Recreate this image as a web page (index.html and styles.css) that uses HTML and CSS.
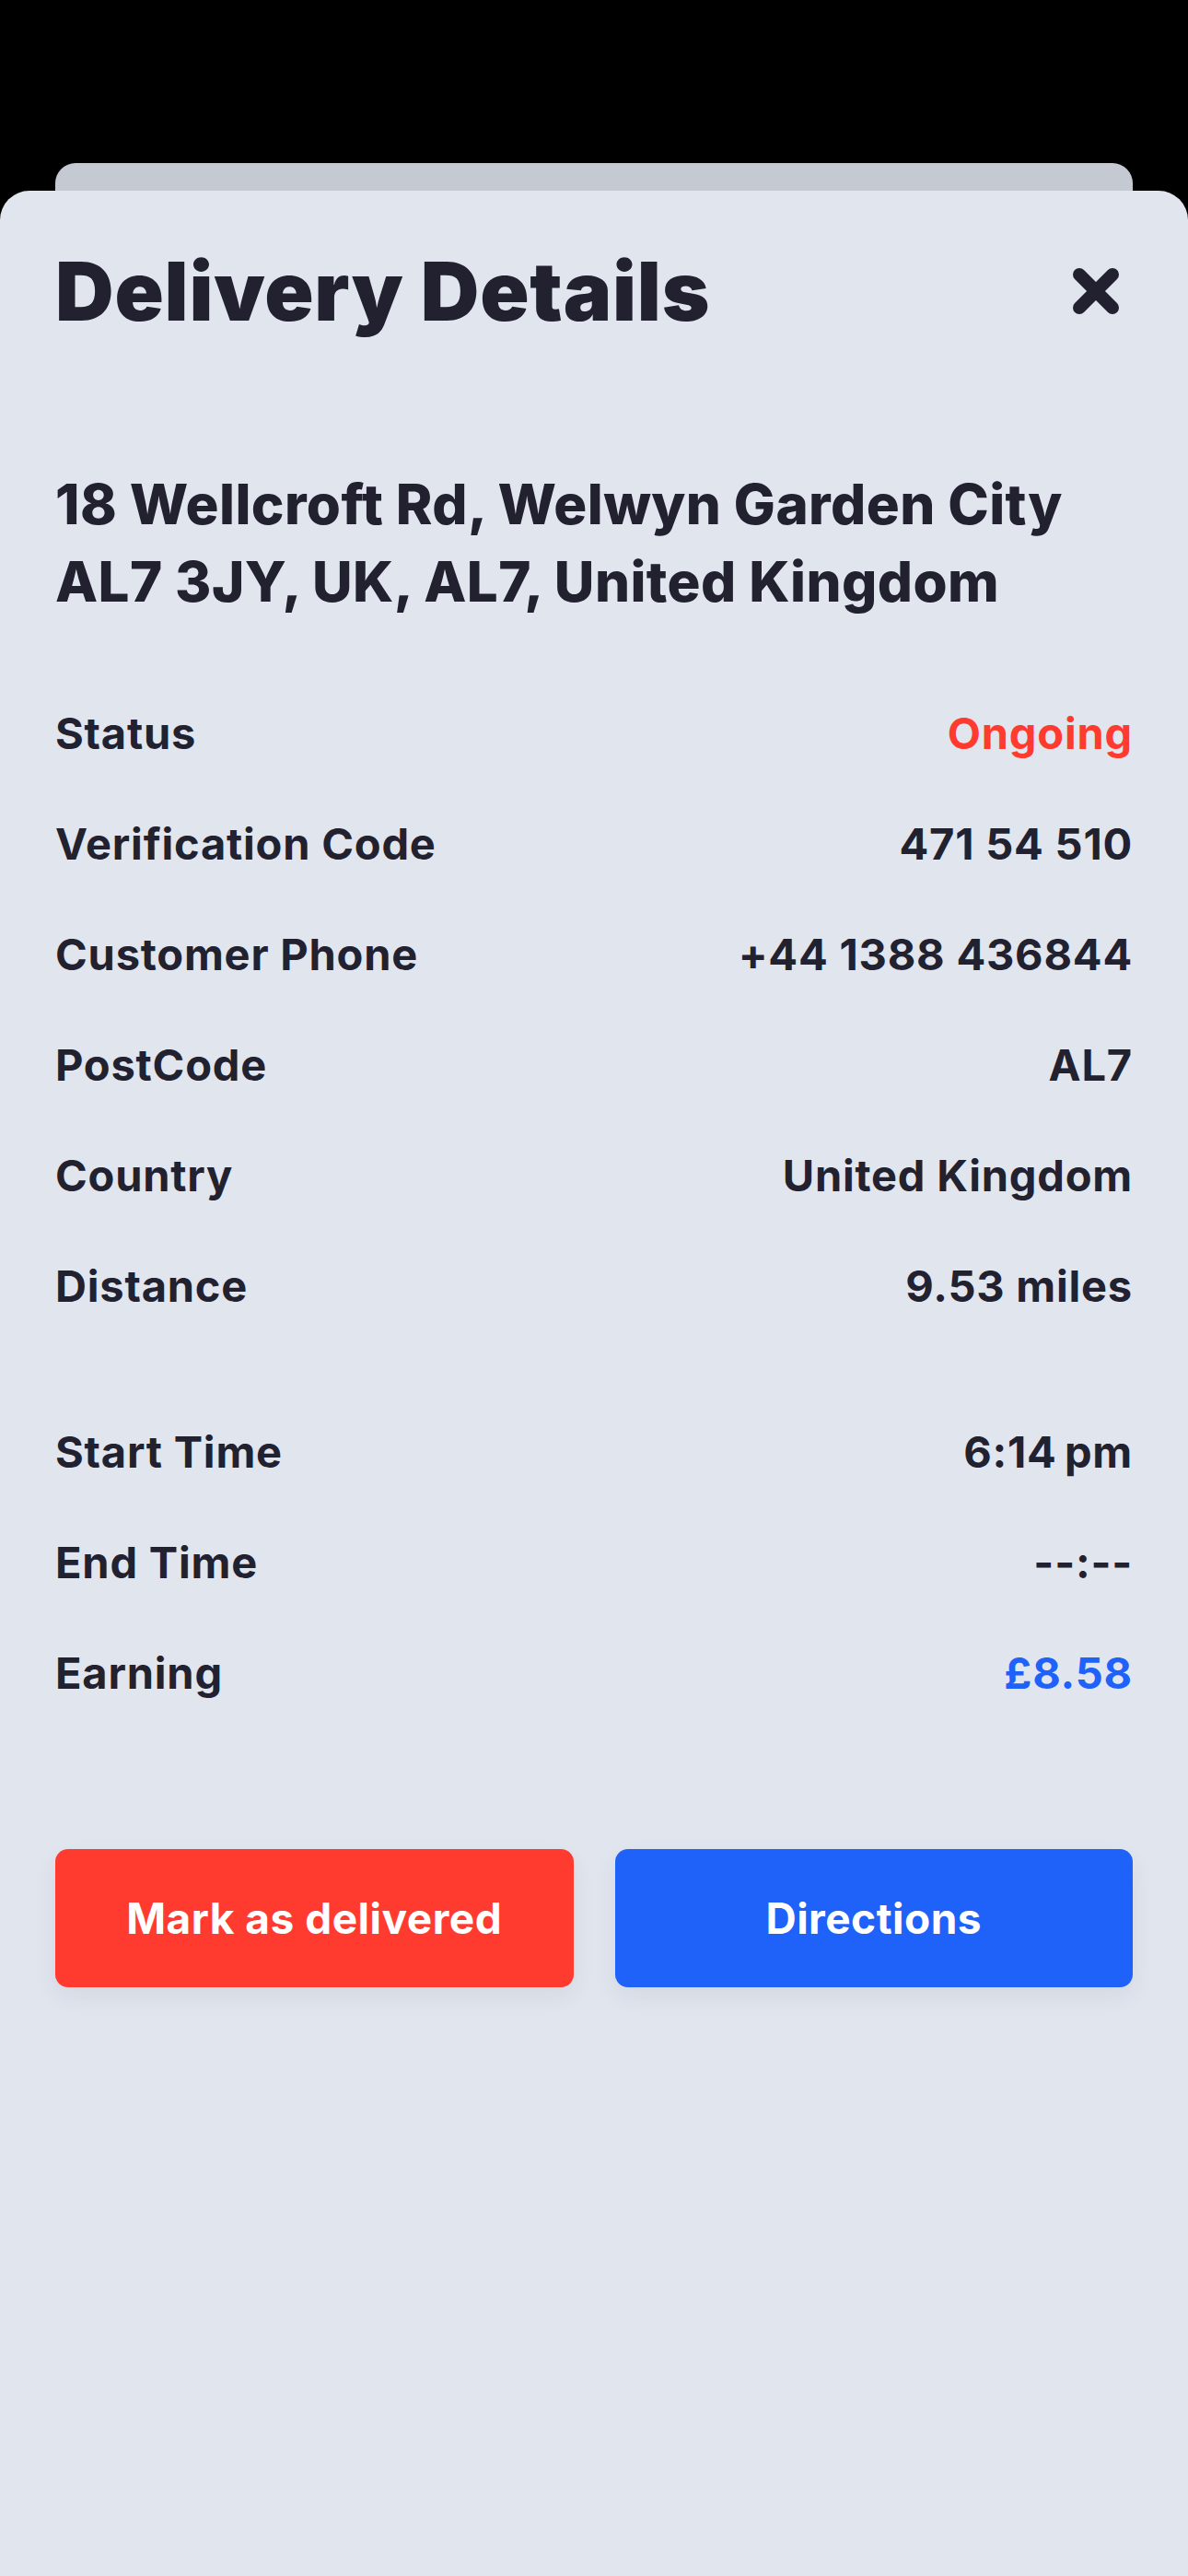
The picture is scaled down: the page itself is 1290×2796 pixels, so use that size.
FILE: index.html
```html
<!DOCTYPE html>
<html lang="en">
<head>
<meta charset="utf-8">
<title>Delivery Details</title>
<link rel="stylesheet" href="styles.css">
</head>
<body>
<div class="screen">
  <div class="back-card"></div>
  <div class="sheet">
    <div class="header">
      <h1 class="title">Delivery Details</h1>
      <button class="close" aria-label="Close">
        <svg width="52" height="52" viewBox="0 0 52 52"><path d="M8 8 L44 44 M44 8 L8 44" stroke="#21212f" stroke-width="14" stroke-linecap="round" fill="none"/></svg>
      </button>
    </div>
    <p class="address">18 Wellcroft Rd, Welwyn Garden City AL7 3JY, UK, AL7, United Kingdom</p>
    <div class="group">
      <div class="row"><span class="label">Status</span><span class="value red">Ongoing</span></div>
      <div class="row"><span class="label">Verification Code</span><span class="value">471 54 510</span></div>
      <div class="row"><span class="label">Customer Phone</span><span class="value">+44 1388 436844</span></div>
      <div class="row"><span class="label">PostCode</span><span class="value">AL7</span></div>
      <div class="row"><span class="label">Country</span><span class="value">United Kingdom</span></div>
      <div class="row"><span class="label">Distance</span><span class="value">9.53 miles</span></div>
    </div>
    <div class="group second">
      <div class="row"><span class="label">Start Time</span><span class="value">6:14&#8201;pm</span></div>
      <div class="row"><span class="label">End Time</span><span class="value">--:--</span></div>
      <div class="row"><span class="label">Earning</span><span class="value blue">£8.58</span></div>
    </div>
    <div class="actions">
      <button class="btn btn-red">Mark as delivered</button>
      <button class="btn btn-blue">Directions</button>
    </div>
  </div>
</div>
</body>
</html>
```

FILE: styles.css
```css
* { box-sizing: border-box; }
html, body { margin: 0; padding: 0; }
body {
  background: #000;
  font-family: "Inter", "Liberation Sans", sans-serif;
  color: #21212f;
}
.screen {
  width: 1290px;
  height: 2796px;
  padding-top: 177px;
  display: flex;
  flex-direction: column;
  overflow: hidden;
}
.back-card {
  height: 30px;
  margin: 0 60px;
  background: #c5c9d1;
  border-radius: 22px 22px 0 0;
  flex: none;
}
.sheet {
  flex: 1;
  background: #e1e5ee;
  border-radius: 32px 32px 0 0;
  padding: 59px 60px 0;
}
.header {
  display: flex;
  align-items: center;
  justify-content: space-between;
  height: 100px;
}
.title {
  margin: 0;
  font-size: 88px;
  line-height: 100px;
  font-weight: 900;
  letter-spacing: 0.8px;
}
.close {
  border: 0;
  background: none;
  padding: 0;
  width: 52px;
  height: 52px;
  margin-right: 14px;
  display: flex;
}
.address {
  margin: 139px 0 0;
  font-size: 60px;
  line-height: 84px;
  font-weight: 800;
  letter-spacing: 0.4px;
  max-width: 1170px;
}
.group { margin-top: 63px; }
.group.second { margin-top: 60px; }
.row {
  display: flex;
  justify-content: space-between;
  align-items: center;
  height: 120px;
  font-size: 47px;
  line-height: 120px;
  font-weight: 700;
  letter-spacing: 0.8px;
}
.red { color: #ff3b30; }
.blue { color: #1e62fa; }
.actions {
  margin-top: 131px;
  display: grid;
  grid-template-columns: 1fr 1fr;
  gap: 45px;
}
.btn {
  height: 150px;
  border: 0;
  border-radius: 14px;
  color: #fff;
  font-family: "Inter", "Liberation Sans", sans-serif;
  font-size: 46px;
  font-weight: 700;
  letter-spacing: 0.5px;
  box-shadow: 0 10px 24px rgba(40, 50, 80, 0.07);
}
.btn-red { background: #ff3b30; }
.btn-blue { background: #1e62fa; }
```
